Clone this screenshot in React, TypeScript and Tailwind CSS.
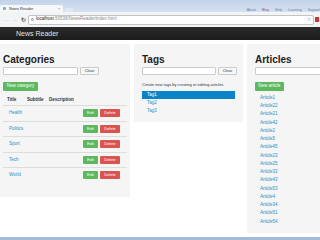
const categories = ["Health", "Politics", "Sport", "Tech", "World"];
const tags = ["Tag1", "Tag2", "Tag3"];
const articles = [
  "Article1", "Article22", "Article21", "Article42", "Article2", "Article5", "Article45", "Article23",
  "Article25", "Article33", "Article43", "Article53", "Article4", "Article34", "Article51", "Article54",
];

const SearchRow = ({ width, clear = true }: { width: string; clear?: boolean }) => (
  <div className="flex h-[9px] items-center gap-[2px]">
    <div className={`h-[8px] shrink-0 rounded-[1px] border border-[#ccc] bg-white ${width}`} />
    {clear && (
      <button className="flex h-[8px] w-[19px] shrink-0 items-center justify-center rounded-[1px] border border-[#ccc] bg-[#f7f7f7] text-[4px] leading-none text-[#333]">
        Clear
      </button>
    )}
  </div>
);

const Panel = ({ title, className, children }: { title: string; className: string; children: React.ReactNode }) => (
  <div className={`overflow-hidden bg-[#f5f5f5] pt-[10px] ${className}`}>
    <h2 className="text-[10px] font-bold leading-[12px] text-[#222]">{title}</h2>
    {children}
  </div>
);

const BrowserChrome = () => (
  <>
    <div className="relative h-[12px] bg-gradient-to-b from-[#c3d3e9] to-[#d5e1f0]">
      <div className="absolute left-0 top-[5px] flex h-[7px] w-[63px] items-center rounded-t-[2px] bg-[#f6f7f9] pl-[3px]">
        <span className="mr-[3px] h-[3px] w-[3px] rounded-[1px] bg-[#8aa4c4]" />
        <span className="text-[4px] leading-none text-[#333]">News Reader</span>
        <span className="ml-auto mr-[3px] text-[4px] leading-none text-[#777]">×</span>
      </div>
      <div className="absolute left-[65px] top-[8px] h-[4px] w-[8px] rounded-t-[1px] bg-[#dfe7f2]" />
      <div className="absolute right-0 top-[9px] flex gap-[6px] text-[3.5px] leading-none text-[#6a7fa3]">
        <span>About</span>
        <span className="text-[#8a5a8a]">Blog</span>
        <span>Help</span>
        <span>Learning</span>
        <span>Support</span>
      </div>
    </div>
    <div className="flex h-[15px] items-center bg-[#f3f4f6] pl-[4px] pr-[1px]">
      <span className="text-[6px] leading-none text-[#bbb]">←</span>
      <span className="ml-[2px] text-[6px] leading-none text-[#ccc]">→</span>
      <span className="ml-[3px] text-[6px] font-bold leading-none text-[#555]">↻</span>
      <div className="ml-[2px] flex h-[10px] flex-1 items-center rounded-[2px] border border-[#c4c4c4] bg-white pl-[2px]">
        <span className="mr-[2px] h-[3px] w-[3px] rounded-full border border-[#888]" />
        <span className="text-[4.5px] leading-none text-[#222]">localhost</span>
        <span className="text-[4.5px] leading-none text-[#888]">:50538/NewsReader/index.html</span>
        <span className="ml-auto mr-[2px] text-[5px] leading-none text-[#777]">☆</span>
      </div>
      <span className="ml-[1px] h-[5px] w-[4px] bg-[#c33]" />
    </div>
    <div className="flex h-[13px] items-center bg-gradient-to-b from-[#2c2c2c] to-[#1b1b1b] pl-[16px]">
      <span className="text-[7px] leading-none text-[#e0e0e0]">News Reader</span>
    </div>
  </>
);

export default function App() {
  return (
    <div className="flex h-[240px] w-[320px] flex-col overflow-hidden bg-white font-['Liberation_Sans',Arial,sans-serif]">
      <BrowserChrome />
      <div className="flex h-[197px] items-start gap-[4px] pt-[4px]">
        <Panel title="Categories" className="w-[130px] shrink-0 px-[3px] pb-[14.5px]">
          <SearchRow width="w-[75px]" />
          <button className="mt-[7px] flex h-[9px] w-[35px] items-center justify-center rounded-[1px] bg-[#5cb85c] text-[4.5px] leading-none text-white">
            New category
          </button>
          <div className="mt-[4px] flex h-[10px] items-center text-[4.5px] font-bold leading-none text-[#333]">
            <span className="w-[24px] pl-[4px]">Title</span>
            <span className="w-[22px]">Subtitle</span>
            <span>Description</span>
          </div>
          {categories.map((name) => (
            <div key={name} className="flex h-[15.5px] items-center border-t border-[#ddd] pl-[6px] pr-[7px]">
              <span className="text-[4.5px] leading-none text-[#2a8fc4]">{name}</span>
              <div className="ml-auto flex gap-[2px]">
                <button className="flex h-[8px] w-[15px] items-center justify-center rounded-[1px] bg-[#5cb85c] text-[4px] leading-none text-white">
                  Edit
                </button>
                <button className="flex h-[8px] w-[20px] items-center justify-center rounded-[1px] bg-[#d9534f] text-[4px] leading-none text-white">
                  Delete
                </button>
              </div>
            </div>
          ))}
        </Panel>
        <Panel title="Tags" className="w-[109px] shrink-0 px-[8px] pb-[7px]">
          <SearchRow width="w-[74px]" />
          <p className="mt-[7px] whitespace-nowrap text-[4px] leading-[6px] text-[#333]">
            Create new tags by creating or editing articles.
          </p>
          <div className="mt-[3px]">
            {tags.map((tag, i) => (
              <div
                key={tag}
                className={`flex h-[8px] items-center pl-[5px] text-[4.5px] leading-none ${
                  i === 0 ? "bg-[#0a84c9] text-white" : "text-[#2a8fc4]"
                }`}
              >
                {tag}
              </div>
            ))}
          </div>
        </Panel>
        <Panel title="Articles" className="min-w-0 flex-1 pb-[7px] pl-[8px]">
          <SearchRow width="w-[80px]" clear={false} />
          <button className="mt-[7px] flex h-[9px] w-[29px] items-center justify-center rounded-[1px] bg-[#5cb85c] text-[4.5px] leading-none text-white">
            New article
          </button>
          <div className="mt-[3px] pl-[5px]">
            {articles.map((a) => (
              <div key={a} className="flex h-[8.25px] items-center text-[4.5px] leading-none text-[#2a8fc4]">
                {a}
              </div>
            ))}
          </div>
        </Panel>
      </div>
      <div className="mt-auto h-[3px] bg-[#a3bad8]" />
    </div>
  );
}
